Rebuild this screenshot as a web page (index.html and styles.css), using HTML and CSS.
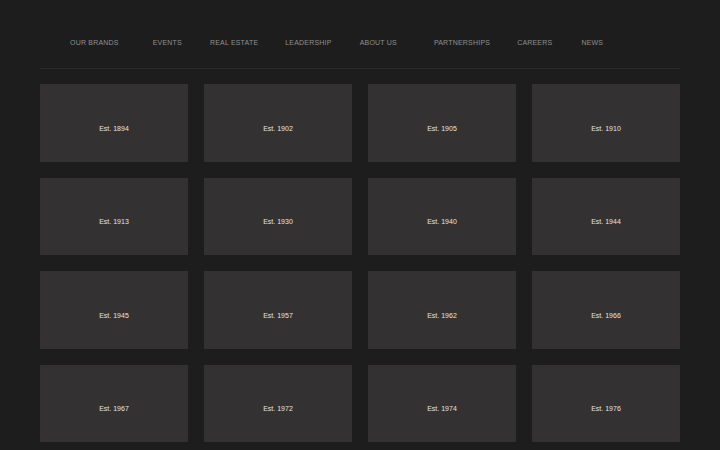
FILE: index.html
```html
<!DOCTYPE html>
<html lang="en">
<head>
    <meta charset="UTF-8">
    <meta name="viewport" content="width=device-width, initial-scale=1.0">
    <title>Brands</title>
    <link rel="stylesheet" href="styles.css">
</head>
<body>
    <div class="container">
        <header class="topBar">
            <nav class="mainNav">
                <a href="#" class="navItem">Our Brands</a>
                <a href="#" class="navItem">Events</a>
                <a href="#" class="navItem">Real Estate</a>
                <a href="#" class="navItem">Leadership</a>
                <a href="#" class="navItem">About Us</a>
                <a href="#" class="navItem">Partnerships</a>
                <a href="#" class="navItem">Careers</a>
                <a href="#" class="navItem">News</a>
            </nav>
        </header>
        <div class="brandGrid">
            <div class="brandCard"><span>Est. 1894</span></div>
            <div class="brandCard"><span>Est. 1902</span></div>
            <div class="brandCard"><span>Est. 1905</span></div>
            <div class="brandCard"><span>Est. 1910</span></div>
            <div class="brandCard"><span>Est. 1913</span></div>
            <div class="brandCard"><span>Est. 1930</span></div>
            <div class="brandCard"><span>Est. 1940</span></div>
            <div class="brandCard"><span>Est. 1944</span></div>
            <div class="brandCard"><span>Est. 1945</span></div>
            <div class="brandCard"><span>Est. 1957</span></div>
            <div class="brandCard"><span>Est. 1962</span></div>
            <div class="brandCard"><span>Est. 1966</span></div>
            <div class="brandCard"><span>Est. 1967</span></div>
            <div class="brandCard"><span>Est. 1972</span></div>
            <div class="brandCard"><span>Est. 1974</span></div>
            <div class="brandCard"><span>Est. 1976</span></div>
        </div>
    </div>
</body>
</html>
```

FILE: styles.css
```css
* {
    margin: 0;
    padding: 0;
    box-sizing: border-box;
}

body {
    background: #1d1d1d;
    font-family: "Liberation Sans", Arial, sans-serif;
    overflow: hidden;
}

.container {
    padding: 0 40px;
}

.topBar {
    height: 69px;
    border-bottom: 1px solid #2a2a2a;
    padding-top: 38px;
}

.mainNav {
    display: flex;
    padding-left: 30px;
}

.navItem {
    flex-shrink: 0;
    white-space: nowrap;
    color: #909090;
    text-decoration: none;
    text-transform: uppercase;
    font-size: 7px;
    letter-spacing: 0.2px;
    line-height: 10px;
    margin-right: 28px;
}

/* spacing between items isn't even in the original */
.navItem:nth-child(1) { margin-right: 34px; }
.navItem:nth-child(3) { margin-right: 27px; }
.navItem:nth-child(5) { margin-right: 37px; }
.navItem:nth-child(6) { margin-right: 27px; }
.navItem:nth-child(7) { margin-right: 29px; }

.brandGrid {
    display: grid;
    grid-template-columns: repeat(4, 1fr);
    gap: 16px;
    margin-top: 15px;
}

.brandCard {
    height: 77.5px;
    background: #333132;
    display: flex;
    align-items: center;
    justify-content: center;
    padding-top: 11px;
    color: #e4e4e4;
    font-size: 7px;
}
```
